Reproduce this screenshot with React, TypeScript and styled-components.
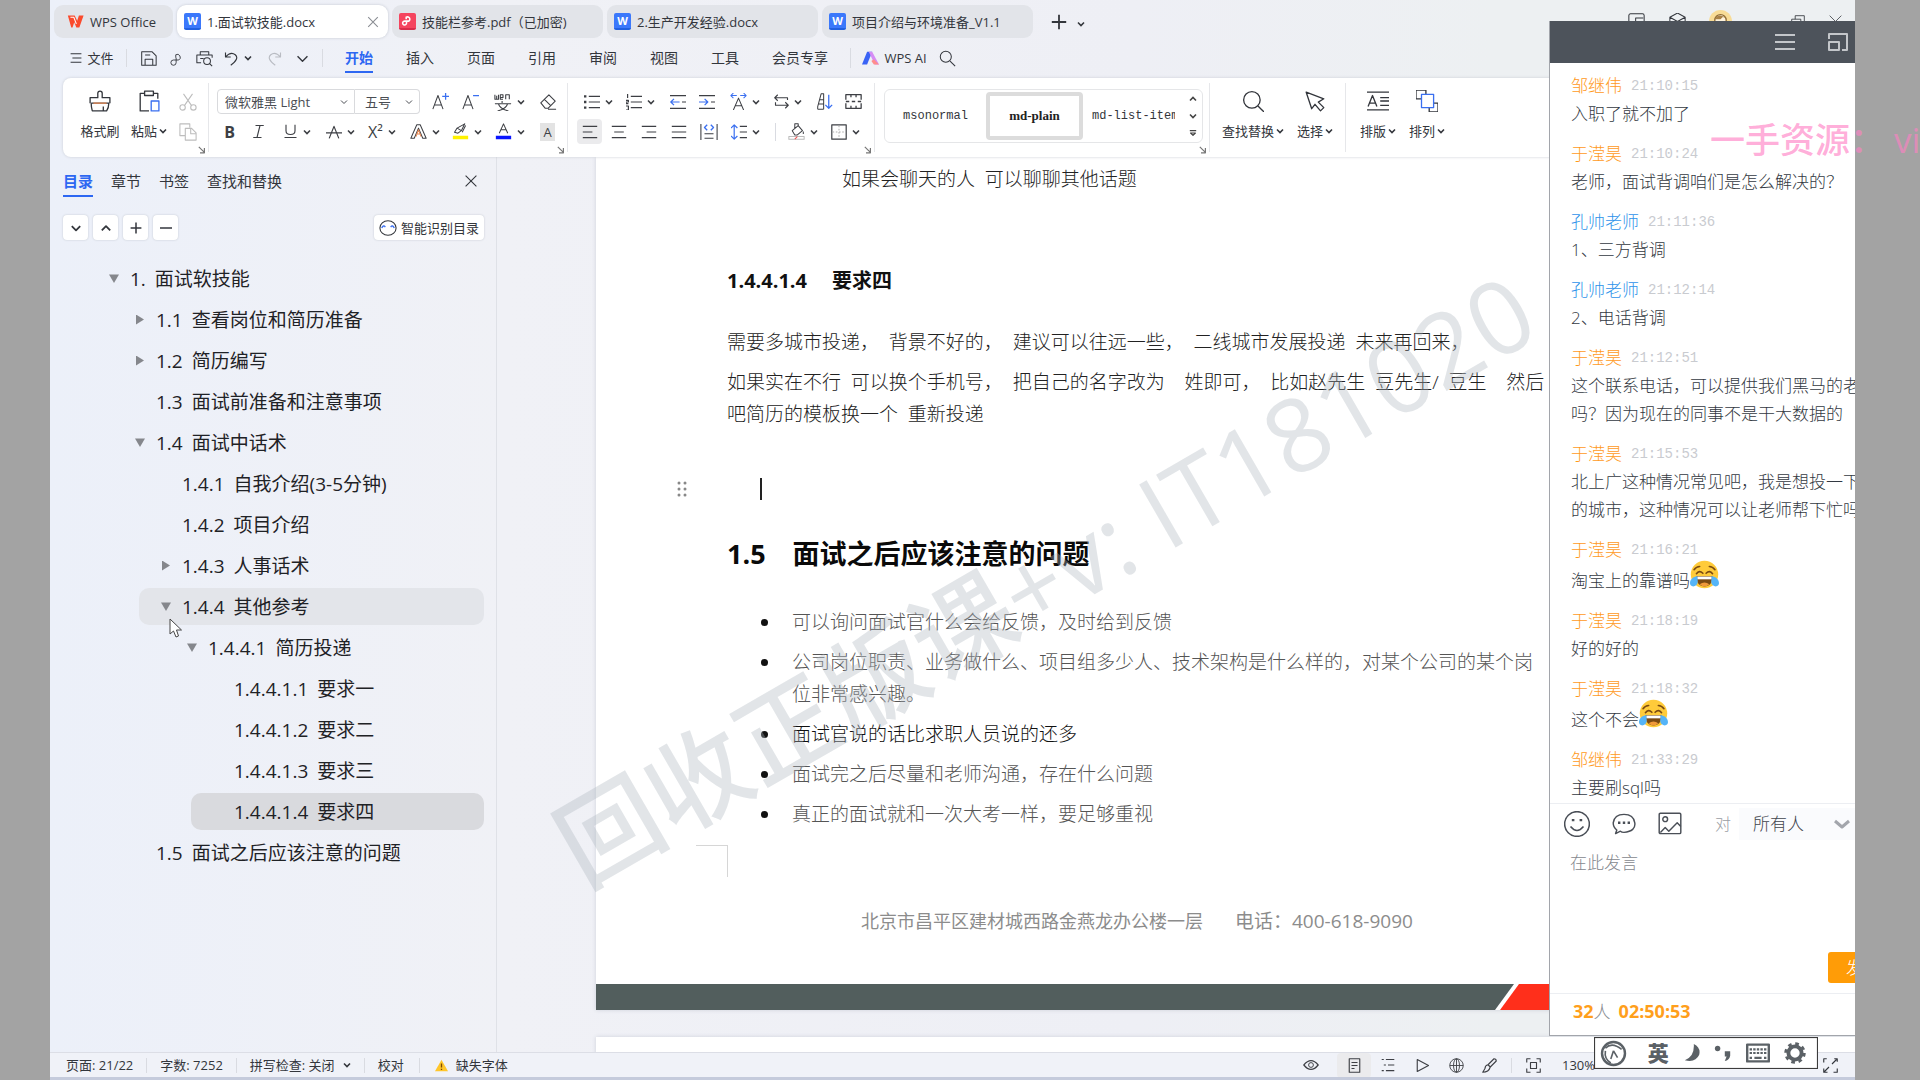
import React from 'react';
import styled, { createGlobalStyle, css } from 'styled-components';

const ui = '"Open Sans", "Noto Sans CJK SC", sans-serif';

const Global = createGlobalStyle`
  * { box-sizing: border-box; }
  html, body { margin: 0; height: 100%; background: #a3a3a3; }
  body { font-family: ${ui}; color: #33363c; overflow: hidden; }
  button, select, textarea { font: inherit; color: inherit; border: 0; background: none; padding: 0; margin: 0; }
  a { color: inherit; text-decoration: none; }
  ul, ol, p, h2, h3 { margin: 0; padding: 0; font-weight: inherit; list-style: none; }
`;

/* ---------- shared pieces ---------- */

const Svg = styled.svg<{ $s?: number }>`
  width: ${p => p.$s ?? 20}px;
  height: ${p => p.$s ?? 20}px;
  flex: none;
  display: block;
  fill: none;
  stroke: currentColor;
  stroke-width: 1.2;
  stroke-linejoin: round;
`;

const Ico = ({ s, children }: { s?: number; children: React.ReactNode }) => (
  <Svg $s={s} viewBox="0 0 20 20" aria-hidden="true">{children}</Svg>
);

const ChevSvg = styled.svg<{ $w?: number }>`
  width: ${p => p.$w ?? 8}px;
  height: 8px;
  flex: none;
  fill: none;
  stroke: currentColor;
  stroke-width: 1.6;
`;
const Chevron = ({ up, w }: { up?: boolean; w?: number }) => (
  <ChevSvg $w={w} viewBox="0 0 8 8" aria-hidden="true">
    <path d={up ? 'M1 5.5 4 2.5 7 5.5' : 'M1 2.5 4 5.5 7 2.5'} />
  </ChevSvg>
);

const blue = '#3a6ff0';

/* ---------- frame ---------- */

const Screen = styled.div`
  position: relative;
  height: 100vh;
  padding: 0 65px 0 50px;
  overflow: hidden;
`;
const AppWindow = styled.div`
  position: relative;
  height: 100%;
  display: flex;
  flex-direction: column;
  overflow: hidden;
  background: linear-gradient(90deg, #ecf0f9 0, #f0f1f6 25%, #eeeff5 60%, #edf0f2 80%);
  border-bottom: 3px solid #c5cbdc;
`;

/* ---------- document tabs ---------- */

const TabBar = styled.header`
  display: flex;
  gap: 4px;
  height: 40px;
  padding: 5px 4px 2px;
  align-items: center;
  flex: none;
`;
const DocTab = styled.button<{ $active?: boolean; $home?: boolean }>`
  display: flex;
  align-items: center;
  gap: 6px;
  width: ${p => (p.$home ? 119 : 211)}px;
  height: 33px;
  padding: 0 ${p => (p.$home ? 13 : 9)}px 0 ${p => (p.$home ? 13 : 7)}px;
  border-radius: 9px;
  font-size: 13px;
  line-height: 20px;
  white-space: nowrap;
  background: ${p => (p.$active ? '#fff' : '#e2e4e9')};
  box-shadow: ${p => (p.$active ? '0 0 3px #c3c7d0' : 'none')};
  > svg:last-child:not(:first-child) { margin-left: auto; color: #8a8d93; }
`;
const FileBadge = styled.span<{ $pdf?: boolean }>`
  display: grid;
  place-items: center;
  width: 17px;
  height: 17px;
  border-radius: 2px;
  color: #fff;
  font-size: 11px;
  font-weight: 700;
  line-height: 14px;
  background: ${p => (p.$pdf ? '#f5455f' : '#3b78fb')};
  border-bottom: 2px solid ${p => (p.$pdf ? '#d92c4a' : '#2160e0')};
`;
const TabTools = styled.div`
  display: flex;
  align-items: center;
  gap: 9px;
  padding-left: 13px;
`;
const WindowTools = styled.div`
  display: flex;
  align-items: center;
  justify-content: space-between;
  width: 214px;
  margin: 0 9px 0 auto;
`;
const Avatar = styled.span`
  width: 23px;
  height: 23px;
  border-radius: 50%;
  overflow: hidden;
  background: #f8dc97;
`;

/* ---------- menu ---------- */

const MenuBar = styled.nav`
  display: flex;
  align-items: center;
  height: 38px;
  padding: 0 0 2px 18px;
  flex: none;
  font-size: 14px;
  line-height: 20px;
`;
const MenuCell = styled.button<{ $w: number; $dim?: boolean }>`
  display: flex;
  align-items: center;
  justify-content: center;
  gap: 5px;
  width: ${p => p.$w}px;
  white-space: nowrap;
  color: ${p => (p.$dim ? '#b9bcc3' : 'inherit')};
  font-size: 13px;
`;
const Rule = styled.span<{ $h?: number; $m?: number }>`
  width: 1px;
  height: ${p => p.$h ?? 18}px;
  margin: 0 ${p => p.$m ?? 0}px;
  background: #d9dbe1;
  flex: none;
`;
const MenuLinks = styled.div`
  display: flex;
  gap: 33px;
  padding: 0 22px 0 17px;
`;
const MenuLink = styled.a<{ $active?: boolean }>`
  padding: 4px 0 3px;
  border-bottom: 2px solid transparent;
  ${p => p.$active && css`color: #2d67f2; font-weight: 700; border-color: #2d67f2;`}
`;

/* ---------- ribbon ---------- */

const Ribbon = styled.section`
  display: flex;
  height: 79px;
  margin-left: 13px;
  flex: none;
  background: #fff;
  border-radius: 8px 0 0 8px;
  box-shadow: 0 0 3px #c9ccd4;
  position: relative;
  z-index: 2;
  overflow: hidden;
`;
const Group = styled.div<{ $w: number; $pad: number; $last?: boolean }>`
  position: relative;
  width: ${p => p.$w}px;
  flex: none;
  padding: 9px 0 9px ${p => p.$pad}px;
  display: flex;
  &::after {
    content: '';
    position: absolute;
    right: 0;
    top: 5px;
    height: 69px;
    width: ${p => (p.$last ? 0 : 1)}px;
    background: #e6e7ea;
  }
`;
const Launcher = styled.button`
  position: absolute;
  right: 3px;
  bottom: 3px;
  color: #777;
`;
const Launch = () => (
  <Launcher aria-label="更多设置"><Ico s={8}><path strokeWidth="3" d="M2 2 16 16M16 5V17H5" /></Ico></Launcher>
);
const Rows = styled.div`
  display: flex;
  flex-direction: column;
  gap: 1px;
`;
const Row = styled.div`
  display: flex;
  align-items: center;
  height: 29px;
`;
const Tool = styled.button<{ $w: number; $on?: boolean; $dim?: boolean }>`
  display: flex;
  align-items: center;
  justify-content: center;
  gap: 5px;
  width: ${p => p.$w}px;
  height: 25px;
  flex: none;
  border-radius: 4px;
  color: ${p => (p.$dim ? '#bdbdbd' : '#3d3f44')};
  background: ${p => (p.$on ? '#ebebed' : 'none')};
`;
const BigTool = styled.button<{ $w: number }>`
  display: flex;
  flex-direction: column;
  align-items: center;
  gap: 9px;
  width: ${p => p.$w}px;
  padding-top: 3px;
  font-size: 13px;
  line-height: 20px;
  white-space: nowrap;
  span { display: flex; align-items: center; gap: 2px; }
`;
const Combo = styled.label<{ $w: number; $side: 'l' | 'r' }>`
  display: grid;
  align-items: center;
  width: ${p => p.$w}px;
  height: 25px;
  border: 1px solid #d9dadd;
  border-left-width: ${p => (p.$side === 'l' ? 1 : 0)}px;
  border-radius: ${p => (p.$side === 'l' ? '4px 0 0 4px' : '0 4px 4px 0')};
  font-size: 13px;
  color: #4a4d53;
  > * { grid-area: 1 / 1; }
  select { appearance: none; width: 100%; height: 23px; padding-left: ${p => (p.$side === 'l' ? 7 : 10)}px; outline: 0; }
  svg { justify-self: end; margin-right: 5px; stroke-width: 1; pointer-events: none; }
`;
const Gallery = styled.div`
  display: flex;
  align-items: center;
  width: 319px;
  height: 54px;
  margin-top: 2px;
  border: 1px solid #e5e6e8;
  border-radius: 6px;
`;
const StyleCell = styled.button<{ $w: number; $on?: boolean }>`
  width: ${p => p.$w}px;
  height: 48px;
  overflow: hidden;
  white-space: nowrap;
  font: ${p => (p.$on ? '700 13px "Liberation Serif", serif' : '12px "Liberation Mono", monospace')};
  ${p => p.$on && css`border: 4px solid #dcdcdc; border-radius: 4px; color: #222;`}
`;
const ClippedName = styled.span`
  display: block;
  width: 83px;
  margin-left: 9px;
  overflow: hidden;
  text-align: left;
`;
const GalleryArrows = styled.div`
  display: flex;
  flex-direction: column;
  gap: 9px;
  margin-left: auto;
  padding-right: 5px;
  button { display: flex; color: #444; }
`;

/* ---------- outline side bar ---------- */

const Workspace = styled.main`
  flex: 1;
  min-height: 0;
  display: grid;
  grid-template-columns: 447px 1fr;
  position: relative;
  overflow: hidden;
`;
const Side = styled.aside`
  border-right: 1px solid #dfe1e7;
  padding: 11px 12px 0 13px;
`;
const SideTabs = styled.div`
  display: flex;
  align-items: center;
  gap: 18px;
  font-size: 15px;
  line-height: 22px;
  > button { margin: 0 7px 3px auto; }
`;
const SideTab = styled.a<{ $on?: boolean }>`
  padding: 2px 0 3px;
  border-bottom: 2px solid transparent;
  ${p => p.$on && css`color: #2d67f2; font-weight: 700; border-color: #2d67f2;`}
`;
const SideTools = styled.div`
  display: flex;
  gap: 5px;
  margin: 18px 0 20px;
`;
const SmallButton = styled.button<{ $wide?: boolean }>`
  display: flex;
  align-items: center;
  justify-content: center;
  gap: 4px;
  width: ${p => (p.$wide ? 110 : 25)}px;
  height: 25px;
  margin-left: ${p => (p.$wide ? 'auto' : 0)};
  background: #fff;
  border-radius: 4px;
  box-shadow: 0 0 2px #bfc3cc;
  font-size: 13px;
  line-height: 20px;
  white-space: nowrap;
`;
const Tree = styled.ul`
  display: flex;
  flex-direction: column;
  gap: 4px;
`;
const TreeRow = styled.li<{ $level: number; $bg?: string }>`
  display: flex;
  align-items: center;
  height: 37px;
  margin-left: ${p => p.$level * 26 - 2}px;
  border-radius: 10px;
  background: ${p => p.$bg ?? 'none'};
  font-size: 19px;
  line-height: 28px;
  color: #1f2226;
`;
const Arrow = styled.button<{ $open?: boolean; $none?: boolean }>`
  width: 21px;
  height: 12px;
  margin-left: 22px;
  visibility: ${p => (p.$none ? 'hidden' : 'visible')};
  &::before {
    content: '';
    display: block;
    width: 10px;
    height: 10px;
    background: #85878c;
    clip-path: ${p => (p.$open ? 'polygon(0 10%, 100% 10%, 50% 95%)' : 'polygon(10% 0, 90% 50%, 10% 100%)')};
  }
`;
const TreeLink = styled.a`
  display: flex;
  gap: 9px;
`;

/* ---------- document ---------- */

const Canvas = styled.div`
  padding-left: 99px;
  overflow: hidden;
  display: flex;
  flex-direction: column;
  gap: 27px;
`;
const Page = styled.article`
  flex: none;
  background: #fff;
  box-shadow: 0 0 4px #cdd1da;
  font-size: 19px;
  line-height: 32px;
  font-weight: 300;
  color: #222;
`;
const PageBody = styled.div`
  padding: 6px 0 0 131px;
  white-space: pre;
`;
const Aside = styled.p`
  padding-left: 115px;
`;
const H3 = styled.h3`
  display: flex;
  gap: 25px;
  margin: 70px 0 29px;
  font-size: 20px;
  font-weight: 700;
  color: #111;
`;
const Para = styled.p`
  margin-bottom: 8px;
`;
const CaretLine = styled.div`
  display: flex;
  align-items: center;
  gap: 70px;
  height: 32px;
  margin: 43px 0 29px -53px;
  color: #888;
`;
const Caret = styled.span`
  width: 2px;
  height: 22px;
  background: #222;
`;
const H2 = styled.h2`
  display: flex;
  gap: 27px;
  margin-bottom: 32px;
  font-size: 27px;
  line-height: 40px;
  font-weight: 700;
  color: #0a0a0a;
`;
const Bullets = styled.ul`
  display: flex;
  flex-direction: column;
  gap: 8px;
  padding-left: 65px;
`;
const Bullet = styled.li<{ $strong?: boolean }>`
  display: grid;
  color: ${p => (p.$strong ? '#111' : '#555')};
  &::before {
    content: '';
    grid-area: 1 / 1;
    width: 7px;
    height: 7px;
    margin: 13px 0 0 -31px;
    border-radius: 50%;
    background: #111;
  }
  > span { grid-area: 1 / 1; }
`;
const CropMark = styled.div`
  width: 32px;
  height: 32px;
  margin: 15px 0 30px -31px;
  border: solid #d6d6d6;
  border-width: 1px 1px 0 0;
`;
const PageFoot = styled.footer`
  display: flex;
  gap: 32px;
  padding-left: 134px;
  font-size: 18px;
  line-height: 28px;
  font-weight: 400;
  color: #8c8c8c;
  span + span { font-size: 19px; }
`;
const FootBar = styled.div`
  display: flex;
  height: 26px;
  margin-top: 49px;
`;
const FootDark = styled.span`
  width: 918px;
  background: #525e5d;
  clip-path: polygon(0 0, 100% 0, calc(100% - 19px) 100%, 0 100%);
`;
const FootRed = styled.span`
  flex: 1;
  margin-left: -14px;
  background: #ff2f1b;
  clip-path: polygon(19px 0, 100% 0, 100% 100%, 0 100%);
`;
const NextPage = styled.div`
  height: 40px;
  flex: none;
  background: #fff;
  box-shadow: 0 0 4px #cdd1da;
`;
const Watermark = styled.div`
  position: absolute;
  left: 515px;
  top: 646px;
  font-size: 102px;
  line-height: 104px;
  font-weight: 500;
  white-space: nowrap;
  color: rgba(176, 182, 192, 0.36);
  transform: rotate(-30deg);
  transform-origin: left center;
  pointer-events: none;
`;
const Pointer = styled.svg`
  position: absolute;
  left: 119px;
  top: 461px;
  width: 14px;
  height: 20px;
  fill: #fff;
  stroke: #444;
`;

/* ---------- status bar ---------- */

const Status = styled.footer`
  display: flex;
  align-items: center;
  height: 25px;
  flex: none;
  padding-left: 3px;
  border-top: 1px solid #dcdee6;
  background: #f0f2f8;
  font-size: 13px;
  line-height: 18px;
  white-space: nowrap;
`;
const StatusItem = styled.button`
  display: flex;
  align-items: center;
  gap: 8px;
  padding: 0 13px;
`;
const StatusRight = styled.div`
  display: flex;
  align-items: center;
  width: 561px;
  margin-left: auto;
  > svg { margin: 0 17px 0 auto; }
`;

/* ---------- chat panel ---------- */

const Chat = styled.section`
  position: absolute;
  z-index: 5;
  right: 65px;
  top: 21px;
  width: 306px;
  height: 1015px;
  max-height: calc(100vh - 44px);
  display: flex;
  flex-direction: column;
  overflow: hidden;
  background: #fff;
  border: solid #a2a5ab;
  border-width: 0 0 1px 1px;
  font-size: 17px;
  line-height: 28px;
  white-space: nowrap;
  font-weight: 300;
`;
const ChatHead = styled.div`
  display: flex;
  justify-content: flex-end;
  align-items: center;
  gap: 33px;
  height: 42px;
  padding-right: 7px;
  flex: none;
  background: #4d535b;
  color: #c3c6ca;
`;
const Messages = styled.ol`
  flex: 1;
  min-height: 0;
  overflow: hidden;
  padding: 9px 0 0 21px;
  display: flex;
  flex-direction: column;
  gap: 12px;
`;
const Byline = styled.div`
  display: flex;
  align-items: center;
  gap: 9px;
  height: 28px;
`;
const Name = styled.span<{ $teacher?: boolean }>`
  color: ${p => (p.$teacher ? '#2f93ea' : '#ff9a1c')};
`;
const Time = styled.time`
  font-family: "Liberation Mono", monospace;
  font-size: 14px;
  color: #c9cbd0;
`;
const Said = styled.p`
  color: #333942;
  white-space: pre;
`;
const EmojiLine = styled(Said)`
  display: flex;
  align-items: flex-end;
  height: 31px;
  svg { width: 29px; height: 29px; margin-bottom: 6px; }
`;
const ChatTools = styled.div`
  display: flex;
  align-items: center;
  height: 42px;
  flex: none;
  padding: 0 0 2px 14px;
  border-top: 1px solid #eceef2;
  color: #4a4f57;
  gap: 22px;
`;
const To = styled.label`
  display: flex;
  align-items: center;
  margin-left: 11px;
  font-size: 16px;
  color: #9a9da3;
`;
const ToBox = styled.span`
  display: grid;
  align-items: center;
  width: 120px;
  height: 32px;
  margin-left: 8px;
  background: #fafbfd;
  > * { grid-area: 1 / 1; }
  select { appearance: none; width: 100%; padding-left: 14px; font-size: 17px; color: #3f444c; outline: 0; }
  svg { justify-self: end; margin-right: 9px; width: 16px; height: 16px; color: #a3a6ac; pointer-events: none; }
`;
const Draft = styled.textarea`
  flex: none;
  height: 107px;
  padding: 4px 0 0 20px;
  resize: none;
  outline: 0;
  overflow: hidden;
  font-weight: 300;
  &::placeholder { color: #85888e; opacity: 1; }
`;
const Send = styled.button`
  flex: none;
  align-self: flex-start;
  width: 80px;
  height: 31px;
  margin: 0 0 10px 278px;
  padding-left: 18px;
  text-align: left;
  border-radius: 3px;
  background: #ff9c07;
  color: #fff;
  line-height: 31px;
`;
const ChatFoot = styled.div`
  display: flex;
  gap: 8px;
  height: 42px;
  flex: none;
  padding: 3px 0 0 23px;
  border-top: 1px solid #eceef2;
  color: #8a8d93;
  b { color: #ff9f1c; font-size: 18px; font-weight: 700; }
`;

/* ---------- input method bar and banner ---------- */

const Ime = styled.div`
  position: absolute;
  z-index: 6;
  right: 102px;
  bottom: 11px;
  width: 224px;
  height: 32px;
  display: flex;
  align-items: center;
  justify-content: space-between;
  padding: 0 11px 0 5px;
  background: #fff;
  border: 1px solid #3c3c3c;
  box-shadow: inset 0 0 1px #555;
  color: #5b6166;
  font-size: 21px;
  font-weight: 900;
  line-height: 28px;
  > span { padding-left: 7px; }
`;
const Banner = styled.div`
  position: absolute;
  z-index: 7;
  right: 0;
  top: 116px;
  width: 210px;
  overflow: hidden;
  white-space: nowrap;
  font-size: 35px;
  font-weight: 500;
  line-height: 48px;
  color: rgba(255, 128, 196, 0.65);
`;

/* ---------- drawings ---------- */

const Joy = () => (
  <svg viewBox="0 0 36 36" aria-label="笑哭" role="img">
    <circle cx="18" cy="18" r="17" fill="#ffcb3a" />
    <path d="M8 20H28C28 29 24 33 18 33S8 29 8 20Z" fill="#7a4a12" />
    <path d="M9 20.500H27V24H9Z" fill="#fff" />
    <path d="M12 30Q18 26 24 30 21 33 18 33T12 30Z" fill="#f0993a" />
    <path d="M8 17Q11.500 12 16 16.500M20 16.500Q24.500 12 28 17M5 12Q8 8 12 8M24 8Q28 8 31 12" fill="none" stroke="#7a4a12" strokeWidth="2" strokeLinecap="round" />
    <path d="M9 20C4 21 0 24 0 29 0 33 5 34 8 31S9 24 9 20ZM27 20C32 21 36 24 36 29 36 33 31 34 28 31S27 24 27 20Z" fill="#55b4f7" />
  </svg>
);

const outline: { n: string; t: string; l: number; a?: 'open' | 'shut'; bg?: string }[] = [
  { n: '1.', t: '面试软技能', l: 1, a: 'open' },
  { n: '1.1', t: '查看岗位和简历准备', l: 2, a: 'shut' },
  { n: '1.2', t: '简历编写', l: 2, a: 'shut' },
  { n: '1.3', t: '面试前准备和注意事项', l: 2 },
  { n: '1.4', t: '面试中话术', l: 2, a: 'open' },
  { n: '1.4.1', t: '自我介绍(3-5分钟)', l: 3 },
  { n: '1.4.2', t: '项目介绍', l: 3 },
  { n: '1.4.3', t: '人事话术', l: 3, a: 'shut' },
  { n: '1.4.4', t: '其他参考', l: 3, a: 'open', bg: '#e3e5ea' },
  { n: '1.4.4.1', t: '简历投递', l: 4, a: 'open' },
  { n: '1.4.4.1.1', t: '要求一', l: 5 },
  { n: '1.4.4.1.2', t: '要求二', l: 5 },
  { n: '1.4.4.1.3', t: '要求三', l: 5 },
  { n: '1.4.4.1.4', t: '要求四', l: 5, bg: '#d9dade' },
  { n: '1.5', t: '面试之后应该注意的问题', l: 2 },
];

const talk: { who: string; at: string; say: string; teacher?: boolean; joy?: boolean }[] = [
  { who: '邹继伟', at: '21:10:15', say: '入职了就不加了' },
  { who: '于滢昊', at: '21:10:24', say: '老师，面试背调咱们是怎么解决的？' },
  { who: '孔帅老师', at: '21:11:36', say: '1、三方背调', teacher: true },
  { who: '孔帅老师', at: '21:12:14', say: '2、电话背调', teacher: true },
  { who: '于滢昊', at: '21:12:51', say: '这个联系电话，可以提供我们黑马的老\n吗？因为现在的同事不是干大数据的' },
  { who: '于滢昊', at: '21:15:53', say: '北上广这种情况常见吧，我是想投一下\n的城市，这种情况可以让老师帮下忙吗' },
  { who: '于滢昊', at: '21:16:21', say: '淘宝上的靠谱吗', joy: true },
  { who: '于滢昊', at: '21:18:19', say: '好的好的' },
  { who: '于滢昊', at: '21:18:32', say: '这个不会', joy: true },
  { who: '邹继伟', at: '21:33:29', say: '主要刷sql吗' },
];

const bullets: { t: string; strong?: boolean }[] = [
  { t: '可以询问面试官什么会给反馈，及时给到反馈' },
  { t: '公司岗位职责、业务做什么、项目组多少人、技术架构是什么样的，对某个公司的某个岗\n位非常感兴趣。' },
  { t: '面试官说的话比求职人员说的还多', strong: true },
  { t: '面试完之后尽量和老师沟通，存在什么问题' },
  { t: '真正的面试就和一次大考一样，要足够重视' },
];

const Letter = styled.span<{ $b?: boolean; $boxed?: boolean }>`
  font-size: 16px;
  line-height: 18px;
  font-weight: ${p => (p.$b ? 700 : 400)};
  ${p => p.$boxed && css`padding: 0 3px; background: #e3e3e3; font-size: 13px;`}
`;

const Tabs = () => (
  <TabBar>
    <DocTab $home>
      <Svg $s={17} viewBox="0 0 20 20"><path d="M1 3H9L12 9 14 3H19.500L14.500 17H11L8.500 11 6.500 17H5Z" fill="#fa4a2c" stroke="none" /><path d="M4 5H8L11 13" stroke="#fff" /></Svg>
      WPS Office
    </DocTab>
    <DocTab $active>
      <FileBadge>W</FileBadge>1.面试软技能.docx
      <Ico s={12}><path strokeWidth="1.800" d="M2 2 18 18M18 2 2 18" /></Ico>
    </DocTab>
    <DocTab><FileBadge $pdf><Ico s={13}><path strokeWidth="2.400" d="M8 8V5A3.500 3.500 0 1 1 12 11H6A3 3 0 1 0 8.500 14V11" /></Ico></FileBadge><span>技能栏参考.pdf（已加密)</span></DocTab>
    <DocTab><FileBadge>W</FileBadge>2.生产开发经验.docx</DocTab>
    <DocTab><FileBadge>W</FileBadge>项目介绍与环境准备_V1.1</DocTab>
    <TabTools>
      <button aria-label="新建"><Ico s={18}><path strokeWidth="2" d="M10 2V18M2 10H18" /></Ico></button>
      <button aria-label="标签列表"><Chevron /></button>
    </TabTools>
    <WindowTools>
      <Ico s={17}><rect x="1" y="1" width="18" height="17" rx="2" /><path d="M9 18V6H18" /></Ico>
      <Ico s={17}><path d="M1 5 10 0 19 5V15L10 20 1 15ZM1 5 10 10 19 5" /></Ico>
      <Avatar><Svg $s={23} viewBox="0 0 20 20"><circle cx="10" cy="9" r="5" fill="#fff3dc" stroke="#8f6c35" /><path d="M5 8Q8 2 15 7L12 6 10 8Z" fill="#a98246" stroke="none" /></Svg></Avatar>
      <Ico s={12}><path strokeWidth="2" d="M1 11H19" /></Ico>
      <Ico s={14}><path d="M1 6H14V19H1ZM6 6V1H19V14H14" /></Ico>
      <Ico s={13}><path d="M1 1 19 19M19 1 1 19" /></Ico>
    </WindowTools>
  </TabBar>
);

const Menu = () => (
  <MenuBar>
    <MenuCell $w={48}>
      <Ico s={12}><path strokeWidth="1.800" d="M1 3H19M4 10H19M1 17H19" /></Ico>文件
    </MenuCell>
    <Rule $m={10} />
    <MenuCell $w={22} aria-label="保存"><Ico s={17}><path d="M2 2H14L19 7V18H2ZM6 18V11H15V18M6 6H12" /></Ico></MenuCell>
    <MenuCell $w={34} aria-label="输出"><Ico s={15}><path d="M9 9V5A4 4 0 1 1 13 12H6A3.500 3.500 0 1 0 9.500 15.500V9" /></Ico></MenuCell>
    <MenuCell $w={22} aria-label="打印预览"><Ico s={17}><path d="M5 6V2H15V6M6 15H1V6H19V9M5 10H9" /><circle cx="13" cy="13" r="4" /><path d="M16 16 19 19" /></Ico></MenuCell>
    <MenuCell $w={46} aria-label="撤销"><Ico s={15}><path d="M2 2V8H9M2 8Q9 0 15 5T9 19" strokeWidth="1.500" /></Ico><Chevron /></MenuCell>
    <MenuCell $w={26} $dim aria-label="恢复"><Ico s={15}><path d="M18 2V8H11M18 8Q11 0 5 5T11 19" strokeWidth="1.500" /></Ico></MenuCell>
    <MenuCell $w={30} aria-label="更多"><Svg $s={11} viewBox="0 0 20 20"><path strokeWidth="2.500" d="M1 6 10 15 19 6" /></Svg></MenuCell>
    <Rule $m={5} />
    <MenuLinks>
      {['开始', '插入', '页面', '引用', '审阅', '视图', '工具', '会员专享'].map((m, i) => (
        <MenuLink key={m} href="#" $active={i === 0}>{m}</MenuLink>
      ))}
    </MenuLinks>
    <Rule $h={20} />
    <MenuCell $w={87}>
      <Svg $s={17} viewBox="0 0 20 20" stroke="none">
        <path d="M6 2H12L6 17H0Z" fill="#3a63f5" stroke="none" />
        <path d="M8 2H12L20 17H15Z" fill="#d58cf5" stroke="none" />
        <path d="M14 11 20 17H14L11 13Z" fill="#ff8d8d" stroke="none" />
      </Svg>
      WPS AI
    </MenuCell>
    <MenuCell $w={18} aria-label="搜索"><Ico s={17}><circle cx="8" cy="8" r="6.500" /><path d="M13 13 19 19" /></Ico></MenuCell>
  </MenuBar>
);

const lines = (d: string) => <Ico s={16}><path strokeWidth="1.500" d={d} /></Ico>;

const RibbonBar = () => (
  <Ribbon>
    <Group $w={146} $pad={12}>
      <BigTool $w={50}>
        <Ico s={22}><path d="M1 12V7H8V3Q8 1 10 1T12 3V7H19V12M2 12H18Q18 16 16 19H3Q2 16 2 12M13 15V19" /><path d="M4 12H16" stroke="#e98a55" /></Ico>
        <span>格式刷</span>
      </BigTool>
      <BigTool $w={48}>
        <Ico s={22}><path d="M6 3H2V19H10M14 3H18V8M6 1H14V5H6Z" /><path d="M12 10H19V19H12Z" stroke={blue} /></Ico>
        <span>粘贴<Chevron /></span>
      </BigTool>
      <Rows>
        <Row><Tool $w={29} $dim aria-label="剪切"><Ico s={18}><circle cx="4" cy="16" r="3" /><circle cx="16" cy="16" r="3" /><path d="M6 14 15 1M14 14 5 1" /></Ico></Tool></Row>
        <Row><Tool $w={29} $dim aria-label="复制"><Ico s={18}><path d="M7 14H1V1H12V5M7 6H14L19 11V19H7ZM13 6V12H19" /></Ico></Tool></Row>
      </Rows>
      <Launch />
    </Group>

    <Group $w={359} $pad={8}>
      <Rows>
        <Row>
          <Combo $w={138} $side="l"><select aria-label="字体"><option>微软雅黑 Light</option></select><Chevron w={10} /></Combo>
          <Combo $w={65} $side="r"><select aria-label="字号"><option>五号</option></select><Chevron w={10} /></Combo>
          <Tool $w={40} aria-label="增大字号"><Ico s={17}><path d="M1 19 7 3 13 19M3 14H11" /><path d="M16 0V8M12 4H20" stroke={blue} strokeWidth="1.500" /></Ico></Tool>
          <Tool $w={21} aria-label="减小字号"><Ico s={17}><path d="M1 19 7 3 13 19M3 14H11" /><path d="M13 3H20" stroke={blue} strokeWidth="1.500" /></Ico></Tool>
          <Tool $w={56} aria-label="拼音指南"><Ico s={18}><path d="M1 2V7H5V2M3 3V7M7 5H10V2H7V7H10M13 7V2H17V7M9 9V11M1 12H19M5 12Q6 17 16 20M15 12Q14 17 4 20" /></Ico><Chevron /></Tool>
          <Tool $w={22} aria-label="清除格式"><Ico s={18}><path d="M2 11 11 2 18 9 10 17H7ZM6 7 13 14M10 18H19" /></Ico></Tool>
        </Row>
        <Row>
          <Tool $w={25} aria-label="加粗"><Letter $b>B</Letter></Tool>
          <Tool $w={33} aria-label="倾斜"><Ico s={15}><path strokeWidth="1.500" d="M6 2H17M3 18H14M12 2 8 18" /></Ico></Tool>
          <Tool $w={44} aria-label="下划线"><Ico s={15}><path strokeWidth="1.500" d="M4 1V9Q4 14 10 14T16 9V1M2 18H18" /></Ico><Chevron /></Tool>
          <Tool $w={42} aria-label="删除线"><Ico s={16}><path d="M4 18 10 3 16 18M0 11H20" strokeWidth="1.500" /></Ico><Chevron /></Tool>
          <Tool $w={42} aria-label="上标"><Letter>X²</Letter><Chevron /></Tool>
          <Tool $w={43} aria-label="文字效果"><Ico s={17}><path d="M1 18 8 2H12L19 18H15L10 6 5 18Z" /><path d="M7 16 10 8 13 16M8 13H12" stroke="#e98a55" /></Ico><Chevron /></Tool>
          <Tool $w={42} aria-label="突出显示"><Ico s={17}><path d="M3 11 6 6 15 1 11 9 7 12ZM6 6 11 9M16 3 12 11" /><path d="M1 17H19" stroke="#fff200" strokeWidth="4" /></Ico><Chevron /></Tool>
          <Tool $w={43} aria-label="字体颜色"><Ico s={17}><path d="M5 12 10 1 15 12M7 8H13" /><path d="M1 17H19" stroke="#0a16ff" strokeWidth="4" /></Ico><Chevron /></Tool>
          <Tool $w={33} aria-label="字符底纹"><Letter $boxed>A</Letter></Tool>
        </Row>
      </Rows>
      <Launch />
    </Group>

    <Group $w={307} $pad={9}>
      <Rows>
        <Row>
          <Tool $w={42} aria-label="项目符号"><Ico s={16}><path strokeWidth="1.500" d="M6 3H20M6 10H20M6 17H20" /><path strokeWidth="3" d="M0 3H3M0 10H3M0 17H3" /></Ico><Chevron /></Tool>
          <Tool $w={43} aria-label="编号"><Ico s={16}><path strokeWidth="1.500" d="M6 3H20M6 10H20M6 17H20M2 0V5M0 8H3V10H0V12H3M0 15H3V20H0" /></Ico><Chevron /></Tool>
          <Tool $w={32} aria-label="减少缩进"><Ico s={16}><path strokeWidth="1.500" d="M0 2H20M0 18H20M15 10H20" /><path stroke={blue} strokeWidth="1.500" d="M12 10H1M5 6 1 10 5 14" /></Ico></Tool>
          <Tool $w={26} aria-label="增加缩进"><Ico s={16}><path strokeWidth="1.500" d="M0 2H20M0 18H20M15 10H20" /><path stroke={blue} strokeWidth="1.500" d="M0 10H11M7 6 11 10 7 14" /></Ico></Tool>
          <Tool $w={49} aria-label="字符缩放"><Ico s={17}><path d="M4 20 10 6 16 20M6 15H14" /><path stroke={blue} d="M1 3H8M4 0 1 3 4 6M12 3H19M16 0 19 3 16 6" /></Ico><Chevron /></Tool>
          <Tool $w={37} aria-label="换行"><Ico s={15}><path strokeWidth="1.500" d="M5 1 1 5 5 9M1 5H18V8M2 11V15H19M15 11 19 15 15 19" /></Ico><Chevron /></Tool>
          <Tool $w={36} aria-label="排序"><Ico s={17}><path d="M2 19V16L6 1H9V19M3 13H9M4 8H9M2 19H9" /><path stroke={blue} strokeWidth="1.500" d="M15 2V18M11 14 15 18 19 14" /></Ico></Tool>
          <Tool $w={22} aria-label="制表位"><Ico s={17}><path strokeWidth="1.500" d="M1 8V2H19V8M1 12V18H19V12M1 10H5M8 10H12M15 10H19M7 2V5M13 2V5M7 15V18M13 15V18" /></Ico></Tool>
        </Row>
        <Row>
          <Tool $w={25} $on aria-label="左对齐">{lines('M1 3H19M1 10H13M1 17H19')}</Tool>
          <Tool $w={34} aria-label="居中">{lines('M1 3H19M4 10H16M1 17H19')}</Tool>
          <Tool $w={26} aria-label="右对齐">{lines('M1 3H19M7 10H19M1 17H19')}</Tool>
          <Tool $w={34} aria-label="两端对齐">{lines('M1 3H19M1 10H19M1 17H19')}</Tool>
          <Tool $w={26} aria-label="分散对齐"><Ico s={18}><path d="M1 1V19M19 1V19M5 12H15M5 17H15" /><path stroke={blue} strokeWidth="1.500" d="M8 2 5 5 8 8M12 2 15 5 12 8" /></Ico></Tool>
          <Tool $w={47} aria-label="行距"><Ico s={16}><path strokeWidth="1.500" d="M11 3H20M11 10H20M11 17H20" /><path stroke={blue} strokeWidth="1.500" d="M4 1V19M0 5 4 1 8 5M0 15 4 19 8 15" /></Ico><Chevron /></Tool>
          <Rule $m={6} />
          <Tool $w={42} aria-label="底纹"><Ico s={17}><path d="M5 9 12 3 17 9 11 14H8ZM8 6V1H12V4M18 10V13" /><path stroke="#bbb" d="M1 16H19V19H1Z" /><path stroke="#f05050" d="M8 19 11 16" /></Ico><Chevron /></Tool>
          <Tool $w={42} aria-label="边框"><Ico s={16}><path d="M1 1H19V19H1Z" strokeWidth="1.500" /><path strokeDasharray="2 2" stroke="#aaa" d="M10 2V18M2 10H18" /></Ico><Chevron /></Tool>
        </Row>
      </Rows>
      <Launch />
    </Group>

    <Group $w={335} $pad={9}>
      <Gallery>
        <StyleCell $w={101}>msonormal</StyleCell>
        <StyleCell $w={97} $on>md-plain</StyleCell>
        <StyleCell $w={96}><ClippedName>md-list-item</ClippedName></StyleCell>
        <GalleryArrows>
          <button aria-label="上一行"><Chevron up /></button>
          <button aria-label="下一行"><Chevron /></button>
          <button aria-label="展开"><Ico s={8}><path strokeWidth="3" d="M2 4H18M4 10H16L10 16Z" /></Ico></button>
        </GalleryArrows>
      </Gallery>
      <Launch />
    </Group>

    <Group $w={136} $pad={9}>
      <BigTool $w={68}>
        <Ico s={22}><circle cx="9" cy="9" r="7.500" /><path d="M14.500 14.500 20 20" /></Ico>
        <span>查找替换<Chevron /></span>
      </BigTool>
      <BigTool $w={56}>
        <Ico s={22}><path d="M2 2 18 8 13 11 18 16 15 19 10 13 7 17Z" /></Ico>
        <span>选择<Chevron /></span>
      </BigTool>
    </Group>

    <Group $w={120} $pad={7} $last>
      <BigTool $w={50}>
        <Ico s={22}><path d="M0 2H20M0 18H20M12 7H20M12 10H20M12 14H20M1 15 5 5 9 15M2 12H8" /></Ico>
        <span>排版<Chevron /></span>
      </BigTool>
      <BigTool $w={48}>
        <Ico s={22}><path d="M5 8H0V0H9V4M12 16V20H20V12H16" /><path stroke={blue} d="M5 4H16V16H5Z" /></Ico>
        <span>排列<Chevron /></span>
      </BigTool>
    </Group>
  </Ribbon>
);

const Outline = () => (
  <Side>
    <SideTabs>
      <SideTab href="#" $on>目录</SideTab>
      <SideTab href="#">章节</SideTab>
      <SideTab href="#">书签</SideTab>
      <SideTab href="#">查找和替换</SideTab>
      <button aria-label="关闭"><Ico s={12}><path strokeWidth="1.800" d="M1 1 19 19M19 1 1 19" /></Ico></button>
    </SideTabs>
    <SideTools>
      <SmallButton aria-label="展开"><Ico s={12}><path strokeWidth="3" d="M3 7 10 14 17 7" /></Ico></SmallButton>
      <SmallButton aria-label="收起"><Ico s={12}><path strokeWidth="3" d="M3 14 10 7 17 14" /></Ico></SmallButton>
      <SmallButton aria-label="增加"><Ico s={12}><path strokeWidth="2.500" d="M10 1V19M1 10H19" /></Ico></SmallButton>
      <SmallButton aria-label="减少"><Ico s={12}><path strokeWidth="2.500" d="M0 10H20" /></Ico></SmallButton>
      <SmallButton $wide>
        <Ico s={18}><ellipse cx="10" cy="10" rx="9" ry="8" /><path stroke={blue} strokeWidth="1.500" d="M3 10Q5 6 7 9M13 9Q15 6 17 10" /></Ico>智能识别目录
      </SmallButton>
    </SideTools>
    <Tree>
      {outline.map(o => (
        <TreeRow key={o.n} $level={o.l} $bg={o.bg}>
          <Arrow $open={o.a === 'open'} $none={!o.a} aria-label="折叠" />
          <TreeLink href="#"><span>{o.n}</span><span>{o.t}</span></TreeLink>
        </TreeRow>
      ))}
    </Tree>
  </Side>
);

const Doc = () => (
  <Canvas>
    <Page>
      <PageBody>
        <Aside>如果会聊天的人  可以聊聊其他话题</Aside>
        <H3><span>1.4.4.1.4</span><span>要求四</span></H3>
        <Para>需要多城市投递，  背景不好的，  建议可以往远一些，  二线城市发展投递  未来再回来，</Para>
        <Para>{'如果实在不行  可以换个手机号，  把自己的名字改为    姓即可，  比如赵先生  豆先生/  豆生    然后\n吧简历的模板换一个  重新投递'}</Para>
        <CaretLine>
          <Svg $s={16} viewBox="0 0 16 16"><path strokeWidth="3" strokeLinecap="round" d="M5 2h.01M11 2h.01M5 8h.01M11 8h.01M5 14h.01M11 14h.01" /></Svg>
          <Caret />
        </CaretLine>
        <H2><span>1.5</span><span>面试之后应该注意的问题</span></H2>
        <Bullets>
          {bullets.map(b => <Bullet key={b.t} $strong={b.strong}><span>{b.t}</span></Bullet>)}
        </Bullets>
        <CropMark />
        <PageFoot><span>北京市昌平区建材城西路金燕龙办公楼一层</span><span>电话：400-618-9090</span></PageFoot>
      </PageBody>
      <FootBar><FootDark /><FootRed /></FootBar>
    </Page>
    <NextPage />
  </Canvas>
);

const StatusBar = () => (
  <Status>
    <StatusItem>页面: 21/22</StatusItem><Rule $h={15} />
    <StatusItem>字数: 7252</StatusItem><Rule $h={15} />
    <StatusItem>拼写检查: 关闭<Chevron /></StatusItem><Rule $h={15} />
    <StatusItem>校对</StatusItem><Rule $h={15} $m={2} />
    <StatusItem>
      <Svg $s={13} viewBox="0 0 20 20"><path d="M10 1 20 19H0Z" fill="#ffc62b" stroke="none" /><path stroke="#7a4a00" strokeWidth="2" d="M10 7V13M10 15V17" /></Svg>缺失字体
    </StatusItem>
    <StatusRight>
      <Tool $w={34} aria-label="护眼"><Ico s={16}><path strokeWidth="1.500" d="M1 10Q10-1 19 10 10 21 1 10Z" /><circle cx="10" cy="10" r="3" /></Ico></Tool>
      <Rule $h={0} $m={4} />
      <Tool $w={34} $on aria-label="页面视图"><Ico s={15}><path strokeWidth="1.500" d="M3 1H17V19H3ZM6 6H14M6 10H14M6 14H10" /></Ico></Tool>
      <Tool $w={34} aria-label="大纲视图"><Ico s={14}><path strokeWidth="1.500" d="M1 2H4M7 2H19M4 10H7M10 10H19M1 18H4M7 18H19" /></Ico></Tool>
      <Tool $w={35} aria-label="阅读"><Ico s={15}><path strokeWidth="1.500" d="M3 2 18 10 3 18Z" /></Ico></Tool>
      <Tool $w={33} aria-label="网页视图"><Ico s={15}><circle cx="10" cy="10" r="9" /><ellipse cx="10" cy="10" rx="4" ry="9" /><path d="M1 10H19M10 1V19" /></Ico></Tool>
      <Tool $w={33} aria-label="写作"><Ico s={15}><path strokeWidth="1.500" d="M8 9 16 1Q19 1 19 4L11 12ZM8 9Q4 10 4 14L1 19Q9 19 11 12" /></Ico></Tool>
      <Rule $h={15} $m={5} />
      <Tool $w={32} aria-label="适应"><Ico s={15}><path strokeWidth="1.500" d="M1 6V1H6M14 1H19V6M19 14V19H14M6 19H1V14M6 6H14V14H6Z" /></Ico></Tool>
      <StatusItem>130%</StatusItem>
      <Ico s={15}><path strokeWidth="1.500" d="M1 6V1H5M15 1H19V5M12 8 18 2M8 12 2 18M1 14V19H6M14 19H19V14" /></Ico>
    </StatusRight>
  </Status>
);

const ChatPanel = () => (
  <Chat>
    <ChatHead>
      <Ico s={20}><path strokeWidth="2" d="M0 3H20M0 10H20M0 17H20" /></Ico>
      <Ico s={20}><path strokeWidth="2" d="M1 7V2H19V18H14M1 10H11V18H1Z" /></Ico>
    </ChatHead>
    <Messages>
      {talk.map(m => (
        <li key={m.at}>
          <Byline><Name $teacher={m.teacher}>{m.who}</Name><Time>{m.at}</Time></Byline>
          {m.joy ? <EmojiLine>{m.say}<Joy /></EmojiLine> : <Said>{m.say}</Said>}
        </li>
      ))}
    </Messages>
    <ChatTools>
      <button aria-label="表情"><Ico s={26}><circle cx="10" cy="10" r="9.500" /><path d="M5 12Q10 18 15 12" /><path strokeWidth="1.800" d="M6 7H8M12 7H14" /></Ico></button>
      <button aria-label="消息"><Ico s={24}><path d="M4 15Q1 13 1 9 2 2 10 2T19 9 10 17Q8 17 7 16L3 18Z" /><path strokeWidth="2" d="M5 9H7M9 9H11M13 9H15" /></Ico></button>
      <button aria-label="图片"><Ico s={24}><rect x="1" y="1" width="18" height="17" rx="1" /><circle cx="6" cy="6" r="2" /><path d="M2 17 6 13 9 16 16 9 19 12" /></Ico></button>
      <To>对
        <ToBox>
          <select aria-label="发送对象"><option>所有人</option></select>
          <Svg viewBox="0 0 16 16"><path strokeWidth="3" d="M1 5 8 11 15 5" /></Svg>
        </ToBox>
      </To>
    </ChatTools>
    <Draft placeholder="在此发言" aria-label="在此发言" />
    <Send>发送</Send>
    <ChatFoot><span><b>32</b>人</span><b>02:50:53</b></ChatFoot>
  </Chat>
);

const ImeBar = () => (
  <Ime>
    <Ico s={27}><circle cx="10" cy="10" r="8.500" strokeWidth="1.800" /><path d="M4 6Q9 1 16 7M4 8Q3 14 8 17M10 8 8 14M10 8 13 13" /></Ico>
    <span>英</span>
    <Ico s={18}><path fill="currentColor" stroke="none" d="M12 0Q20 4 18 12 14 21 2 18 13 14 12 0Z" /></Ico>
    <Ico s={18}><circle cx="4" cy="5" r="3" fill="currentColor" stroke="none" /><path fill="currentColor" stroke="none" d="M12 8H18V13Q17 18 12 19L14 14H12Z" /></Ico>
    <Ico s={24}><path strokeWidth="2" d="M1 3H19V17H1Z" /><path strokeWidth="1.800" strokeDasharray="2 1" d="M3 7H17M3 10H17" /><path strokeWidth="1.800" d="M3 14H5M7 14H13M15 14H17" /></Ico>
    <Ico s={22}><circle cx="10" cy="10" r="6" strokeWidth="3.500" /><circle cx="10" cy="10" r="8.500" strokeWidth="2.500" strokeDasharray="3.300 3.370" /></Ico>
  </Ime>
);

export default function App() {
  return (
    <Screen lang="zh-CN">
      <Global />
      <AppWindow>
        <Tabs />
        <Menu />
        <RibbonBar />
        <Workspace>
          <Outline />
          <Doc />
          <Watermark>回收正版课+v: IT181020</Watermark>
          <Pointer viewBox="0 0 14 20"><path d="M1 1V16L4.500 13 7 19 9.500 18 7.500 12H12.500Z" /></Pointer>
        </Workspace>
        <StatusBar />
      </AppWindow>
      <ChatPanel />
      <ImeBar />
      <Banner>一手资源： vi</Banner>
    </Screen>
  );
}
